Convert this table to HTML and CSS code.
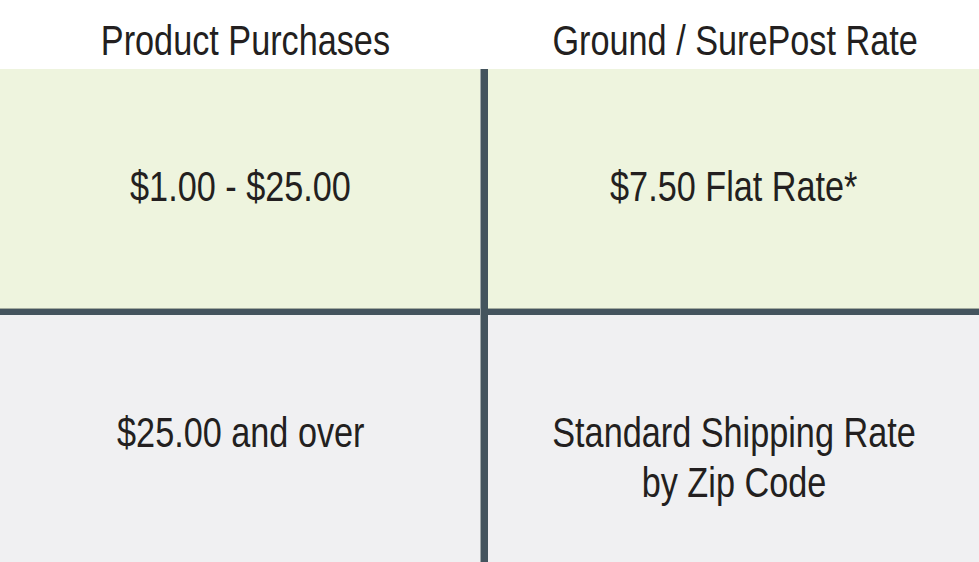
FILE: index.html
```html
<!DOCTYPE html>
<html lang="en">
<head>
<meta charset="utf-8">
<title>Shipping Rates</title>
<link rel="stylesheet" href="styles.css">
</head>
<body>
<div class="rates">
  <div class="head c-left head-left"><span class="txt">Product Purchases</span></div>
  <div class="head c-right head-right"><span class="txt">Ground / SurePost Rate</span></div>

  <div class="cell green c-left r-1"><span class="txt">$1.00 - $25.00</span></div>
  <div class="cell green c-right r-1"><span class="txt">$7.50 Flat Rate*</span></div>

  <div class="hline"></div>

  <div class="cell gray c-left r-2"><span class="txt">$25.00 and over</span></div>
  <div class="cell gray c-right r-2"><span class="txt">Standard Shipping Rate<br>by Zip Code</span></div>

  <div class="vline"></div>
</div>
</body>
</html>
```
FILE: styles.css
```css
html, body {
  margin: 0;
  padding: 0;
  background: #ffffff;
}
body {
  width: 979px;
  height: 562px;
  overflow: hidden;
  font-family: "Liberation Sans", Arial, sans-serif;
  color: #231f20;
}
.rates {
  display: grid;
  grid-template-columns: 481px 7px 1fr;
  grid-template-rows: 69px 240px 6px 260px;
}
.c-left {
  grid-column: 1;
}
.c-right {
  grid-column: 3;
}
.head {
  grid-row: 1;
  text-align: center;
  padding-top: 16px;
  font-size: 42px;
  line-height: 50px;
}
.head-left {
  padding-left: 9px;
}
.head-right {
  padding-left: 4px;
}
.r-1 {
  grid-row: 2;
}
.r-2 {
  grid-row: 4;
}
.txt {
  display: inline-block;
  transform: scaleX(0.815);
  white-space: nowrap;
}
.cell {
  text-align: center;
  font-size: 42px;
  line-height: 50px;
  padding-top: 93px;
}
.green {
  background: #eef4de;
}
.gray {
  background: #f0f0f2;
}
.vline {
  grid-column: 2;
  grid-row: 2 / 5;
  background: #44545e;
  box-shadow: -1px 0 0 #9fa7a9;
}
.hline {
  grid-column: 1 / 4;
  grid-row: 3;
  background: #44545e;
  box-shadow: 0 -1px 0 #a3ab9f;
}
```
